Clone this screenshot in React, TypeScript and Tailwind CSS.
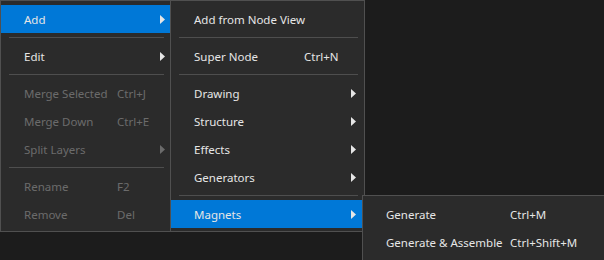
import React from 'react';

type Item =
  | { kind: 'sep' }
  | { kind: 'item'; label: string; shortcut?: string; sub?: boolean; disabled?: boolean; active?: boolean };

const sep: Item = { kind: 'sep' };

const mainMenu: Item[] = [
  { kind: 'item', label: 'Add', sub: true, active: true },
  sep,
  { kind: 'item', label: 'Edit', sub: true },
  sep,
  { kind: 'item', label: 'Merge Selected', shortcut: 'Ctrl+J', disabled: true },
  { kind: 'item', label: 'Merge Down', shortcut: 'Ctrl+E', disabled: true },
  { kind: 'item', label: 'Split Layers', sub: true, disabled: true },
  sep,
  { kind: 'item', label: 'Rename', shortcut: 'F2', disabled: true },
  { kind: 'item', label: 'Remove', shortcut: 'Del', disabled: true },
];

const addMenu: Item[] = [
  { kind: 'item', label: 'Add from Node View' },
  sep,
  { kind: 'item', label: 'Super Node', shortcut: 'Ctrl+N' },
  sep,
  { kind: 'item', label: 'Drawing', sub: true },
  { kind: 'item', label: 'Structure', sub: true },
  { kind: 'item', label: 'Effects', sub: true },
  { kind: 'item', label: 'Generators', sub: true },
  sep,
  { kind: 'item', label: 'Magnets', sub: true, active: true },
];

const magnetsMenu: Item[] = [
  { kind: 'item', label: 'Generate', shortcut: 'Ctrl+M' },
  { kind: 'item', label: 'Generate & Assemble', shortcut: 'Ctrl+Shift+M' },
];

const Arrow = ({ dim }: { dim?: boolean }) => (
  <svg width="5" height="9" viewBox="0 0 5 9" className={dim ? 'text-[#6b6b6b]' : 'text-[#e6e6e6]'}>
    <path d="M0 0 L5 4.5 L0 9 Z" fill="currentColor" />
  </svg>
);

const MenuList = ({ items, labelW, pr }: { items: Item[]; labelW: string; pr: string }) => (
  <div className="flex flex-col">
    {items.map((it, i) =>
      it.kind === 'sep' ? (
        <div key={i} className="py-1 pl-2 pr-1.5">
          <div className="h-px bg-[#4e4e4e]" />
        </div>
      ) : (
        <div
          key={i}
          className={`flex h-7 items-center pl-[23px] ${pr} ${it.active ? 'bg-[#0078d7]' : ''} ${
            it.disabled ? 'text-[#6b6b6b]' : 'text-[#e6e6e6]'
          }`}
        >
          <span className={`${labelW} shrink-0 whitespace-nowrap pt-[2px]`}>{it.label}</span>
          <span className="flex-1 whitespace-nowrap pt-[2px]">{it.shortcut}</span>
          <span className="flex w-[8px] justify-start">{it.sub && <Arrow dim={it.disabled} />}</span>
        </div>
      )
    )}
  </div>
);

export default function App() {
  return (
    <div
      className="h-[260px] w-[604px] overflow-hidden bg-[#1c1c1c] text-[11.5px]"
      style={{ fontFamily: '"Noto Sans", "Open Sans", sans-serif' }}
    >
      <div className="flex items-start">
        <div className="w-[171px] border border-[#505050] bg-[#2b2b2b] pb-[3px] pt-1">
          <MenuList items={mainMenu} labelW="w-[93px]" pr="pr-[2px]" />
        </div>
        <div className="relative -ml-px w-[195px] border border-[#505050] bg-[#2b2b2b] pb-[3px] pt-1">
          <MenuList items={addMenu} labelW="w-[110px]" pr="pr-[5px]" />
          <div className="absolute left-[191px] top-[194px] w-[260px] border border-[#505050] bg-[#2b2b2b] pb-1 pt-1">
            <MenuList items={magnetsMenu} labelW="w-[124px]" pr="pr-[6px]" />
          </div>
        </div>
      </div>
    </div>
  );
}
